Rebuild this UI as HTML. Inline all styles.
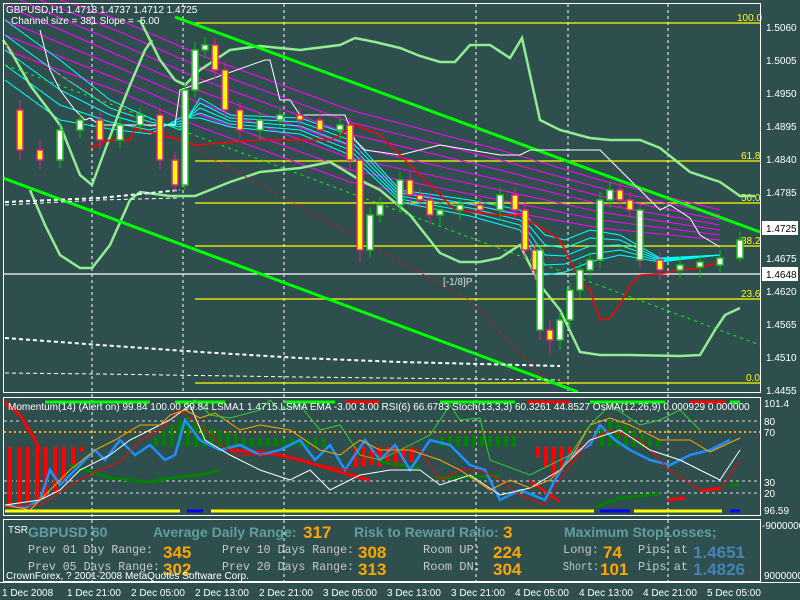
<!DOCTYPE html>
<html><head><meta charset="utf-8"><style>
body{margin:0;background:#2f4f4f;width:800px;height:600px;overflow:hidden;font-family:"Liberation Sans",sans-serif}
svg{position:absolute;left:0;top:0}
.t{font-family:"Liberation Sans",sans-serif;font-size:10px;fill:#fff}
.m{font-family:"Liberation Mono",monospace;font-size:12px;fill:#c8c8c8}
.o{font-family:"Liberation Sans",sans-serif;font-size:17px;font-weight:bold;fill:#ffa500}
.c{font-family:"Liberation Sans",sans-serif;font-size:14px;font-weight:bold;fill:#5f9ea0}
</style></head><body>
<svg width="800" height="600" viewBox="0 0 800 600">
<rect width="800" height="600" fill="#2f4f4f"/>
<g stroke="#fff" stroke-dasharray="3,3" stroke-width="1">
<line x1="92" y1="4" x2="92" y2="582"/><line x1="183" y1="4" x2="183" y2="392"/><line x1="284" y1="4" x2="284" y2="582"/>
<line x1="476" y1="4" x2="476" y2="582"/><line x1="568" y1="4" x2="568" y2="392"/><line x1="668" y1="4" x2="668" y2="582"/>
</g>
<g stroke="#ffff00" stroke-width="1.3">
<line x1="195" y1="23" x2="760" y2="23"/><line x1="195" y1="161" x2="760" y2="161"/><line x1="195" y1="203" x2="760" y2="203"/>
<line x1="195" y1="246" x2="760" y2="246"/><line x1="195" y1="383" x2="760" y2="383"/><line x1="195" y1="299" x2="760" y2="299"/></g>
<line x1="3" y1="274" x2="760" y2="274" stroke="#fff" stroke-width="1.2"/>
<g font-family="Liberation Sans" font-size="10" fill="#ffff00">
<text x="737" y="21">100.0</text><text x="741" y="159">61.8</text><text x="741" y="201">50.0</text><text x="741" y="244">38.2</text><text x="741" y="297">23.6</text><text x="746" y="381">0.0</text></g>
<g fill="none" stroke="#ff00ff" stroke-width="1">
<polyline points="60,0 120,20 200,55 350,110 500,150 600,180 720,210"/>
<polyline points="40,0 120,32 200,67 350,122 500,160 600,188 720,215"/>
<polyline points="20,0 120,44 200,79 350,134 500,170 600,196 720,220"/>
<polyline points="5,5 120,56 200,91 350,146 500,180 600,204 720,225"/>
<polyline points="5,20 120,68 200,103 350,158 500,190 600,212 720,230"/>
<polyline points="5,35 120,80 200,115 350,170 500,200 600,220 720,235"/>
<polyline points="5,50 120,92 200,127 350,182 500,210 600,228 720,240"/>
</g>
<g fill="none" stroke="#00ffff" stroke-width="1">
<polyline points="5,20 60,60 110,100 150,118 180,130 200,98 230,115 300,118 350,135 400,190 470,200 520,210 545,235 565,240 590,230 620,235 660,258 720,255"/>
<polyline points="5,35 60,75 110,108 150,122 180,127 200,103 230,118 300,122 350,140 400,193 470,204 520,215 545,245 565,248 590,238 620,240 660,259 720,255"/>
<polyline points="5,50 60,90 110,115 150,126 180,124 200,108 230,121 300,126 350,145 400,196 470,208 520,220 545,255 565,256 590,246 620,245 660,260 720,255"/>
<polyline points="5,65 60,105 110,122 150,130 180,121 200,113 230,124 300,130 350,150 400,199 470,212 520,225 545,265 565,264 590,254 620,250 660,261 720,255"/>
<polyline points="5,80 60,120 110,129 150,134 180,118 200,118 230,127 300,134 350,155 400,202 470,216 520,230 545,275 565,272 590,262 620,255 660,262 720,255"/>
</g>
<g fill="none" stroke="#90ee90" stroke-width="2.5">
<polyline points="3,40 10,50 30,85 60,125 80,175 92,185 105,150 120,110 130,85 145,50 152,40"/>
<polyline points="140,20 160,60 175,80 185,85 200,70 230,50 260,46 300,50 340,45 355,38 375,42 400,48 420,56 440,62 455,62 470,45 490,45 510,58 522,38 540,120 560,130 590,138 610,140 640,140 660,148 690,172 720,182 740,196 755,196"/>
<polyline points="30,190 45,225 60,255 80,268 92,268 110,245 130,200 140,192 170,196 195,196 230,182 260,172 300,168 330,162 360,180 380,190 410,215 440,253 460,262 480,262 500,258 520,245 540,285 560,310 580,352 600,355 630,355 680,356 700,355 715,330 725,315 740,308"/>
</g>
<line x1="175" y1="17" x2="760" y2="232" stroke="#00ff00" stroke-width="3"/>
<line x1="3" y1="178" x2="578" y2="392" stroke="#00ff00" stroke-width="3"/>
<line x1="5" y1="65" x2="760" y2="345" stroke="#00ff00" stroke-width="1" stroke-dasharray="3,4"/>
<line x1="5" y1="45" x2="470" y2="300" stroke="#ff0000" stroke-width="1" stroke-dasharray="3,4"/>
<line x1="470" y1="300" x2="545" y2="380" stroke="#ff0000" stroke-width="1" stroke-dasharray="3,4"/>
<g fill="none" stroke="#fff" stroke-dasharray="4,3">
<polyline stroke-width="2" points="5,338 100,345 200,352 300,358 400,362 560,366"/>
<polyline stroke-width="1" points="5,373 100,374 300,377 560,380"/>
<polyline stroke-width="1" points="5,205 100,200 180,198"/>
<polyline stroke-width="2" points="5,202 100,198 180,190"/>
</g>
<polyline fill="none" stroke="#fff" stroke-width="1" points="40,30 50,70 60,90 75,110 85,120 90,118 100,125 175,125 180,90 265,60 270,60 280,100 290,100 300,115 345,115 355,140 365,150 400,155 440,145 470,150 500,155 520,155 530,150 600,150 660,210 670,205 690,218 700,235 720,247"/>
<polyline fill="none" stroke="#ff0000" stroke-width="1.5" points="90,148 110,140 130,140 135,128 180,140 195,145 260,140 330,140 340,135 355,125 380,135 395,150 430,185 455,210 500,215 520,215 545,230 560,240 580,280 590,290 600,320 610,318 620,305 630,285 640,275 660,274 680,270 700,268 720,262"/>
<path fill="none" stroke="#e0208a" stroke-width="1" d="M20 100V160M40 140V170M100 112V150M160 108V170M175 152V192M215 38V80M225 62V118M240 102V138M300 108V128M320 112V140M350 118V170M360 150V262M410 172V204M420 188V208M430 192V224M480 198V216M515 188V220M525 202V258M535 242V280M540 262V340M550 320V355M620 183V208M630 192V218M640 202V268M660 252V280"/>
<path fill="none" stroke="#00c000" stroke-width="1" d="M60 122V168M80 112V138M120 118V148M140 108V132M185 82V190M195 42V98M205 37V58M260 112V140M280 108V128M340 118V140M370 207V258M380 197V222M400 172V212M440 202V225M460 197V220M500 187V218M560 312V350M570 282V328M580 262V298M590 252V278M600 192V268M610 182V208M680 257V278M700 255V278M720 250V272M740 232V262"/>
<g stroke="#e0208a" stroke-width="1.5" fill="#ffff00">
<rect x="17" y="110" width="6" height="40"/><rect x="37" y="150" width="6" height="10"/><rect x="97" y="120" width="6" height="20"/>
<rect x="157" y="115" width="6" height="45"/><rect x="172" y="160" width="6" height="25"/><rect x="212" y="45" width="6" height="25"/>
<rect x="222" y="70" width="6" height="40"/><rect x="237" y="110" width="6" height="20"/><rect x="297" y="115" width="6" height="5"/>
<rect x="317" y="120" width="6" height="10"/><rect x="347" y="125" width="6" height="35"/><rect x="357" y="160" width="6" height="90"/>
<rect x="407" y="180" width="6" height="15"/><rect x="417" y="195" width="6" height="5"/><rect x="427" y="200" width="6" height="15"/>
<rect x="477" y="205" width="6" height="5"/><rect x="512" y="195" width="6" height="15"/><rect x="522" y="210" width="6" height="40"/>
<rect x="532" y="250" width="6" height="20"/><rect x="547" y="330" width="6" height="10"/>
<rect x="617" y="190" width="6" height="10"/><rect x="627" y="200" width="6" height="10"/><rect x="657" y="260" width="6" height="10"/></g>
<g stroke="#20c020" stroke-width="1.5" fill="#fff">
<rect x="57" y="130" width="6" height="30"/><rect x="77" y="120" width="6" height="10"/><rect x="117" y="125" width="6" height="15"/>
<rect x="137" y="115" width="6" height="10"/><rect x="182" y="90" width="6" height="95"/><rect x="192" y="50" width="6" height="40"/>
<rect x="202" y="45" width="6" height="5"/><rect x="257" y="120" width="6" height="10"/><rect x="277" y="115" width="6" height="5"/>
<rect x="337" y="125" width="6" height="5"/><rect x="367" y="215" width="6" height="35"/><rect x="377" y="205" width="6" height="10"/>
<rect x="397" y="180" width="6" height="25"/><rect x="437" y="210" width="6" height="5"/><rect x="457" y="205" width="6" height="5"/>
<rect x="497" y="195" width="6" height="15"/><rect x="537" y="250" width="6" height="80"/><rect x="557" y="320" width="6" height="20"/>
<rect x="567" y="290" width="6" height="30"/><rect x="577" y="270" width="6" height="20"/><rect x="587" y="260" width="6" height="10"/>
<rect x="597" y="200" width="6" height="60"/><rect x="607" y="190" width="6" height="10"/><rect x="637" y="210" width="6" height="50"/>
<rect x="677" y="265" width="6" height="5"/><rect x="697" y="262" width="6" height="5"/><rect x="717" y="258" width="6" height="7"/>
<rect x="737" y="240" width="6" height="18"/></g>
<text x="443" y="285" font-family="Liberation Sans" font-size="10" fill="#ddd">[-1/8]P</text>
<rect x="3.5" y="3.5" width="757" height="389" fill="none" stroke="#fff"/>
<rect x="3.5" y="397.5" width="757" height="118" fill="none" stroke="#fff"/>
<rect x="3.5" y="519.5" width="757" height="62" fill="none" stroke="#fff"/>
<line x1="0" y1="582.5" x2="800" y2="582.5" stroke="#fff"/>
<text class="t" x="6" y="13">GBPUSD,H1  1.4718 1.4737 1.4712 1.4725</text>
<text class="t" x="11" y="24" fill="#ddd">Channel size = 381 Slope = -5.00</text>
<g class="t" font-size="10">
<text x="766" y="31">1.5060</text><text x="766" y="64">1.5005</text><text x="766" y="97">1.4950</text><text x="766" y="130">1.4895</text>
<text x="766" y="163">1.4840</text><text x="766" y="196">1.4785</text><text x="766" y="262">1.4675</text><text x="766" y="295">1.4620</text>
<text x="766" y="328">1.4565</text><text x="766" y="361">1.4510</text><text x="766" y="394">1.4455</text></g>
<rect x="762" y="221" width="36" height="14" fill="#fff"/><text x="766" y="232" class="t" style="fill:#000">1.4725</text>
<rect x="762" y="267" width="36" height="14" fill="#fff"/><text x="766" y="278" class="t" style="fill:#000">1.4648</text>
<g stroke="#fff" stroke-dasharray="3,3" opacity="0.8"><line x1="4" y1="421" x2="760" y2="421"/><line x1="4" y1="481" x2="760" y2="481"/><line x1="4" y1="493" x2="760" y2="493"/></g>
<line x1="4" y1="432" x2="760" y2="432" stroke="#ffa500" stroke-width="2" stroke-dasharray="2,3"/>
<g fill="#ff0000">
<rect x="8" y="447" width="4" height="60"/><rect x="17" y="447" width="4" height="58"/><rect x="26" y="447" width="4" height="56"/>
<rect x="35" y="447" width="4" height="54"/><rect x="44" y="447" width="4" height="50"/><rect x="53" y="447" width="4" height="45"/>
<rect x="62" y="447" width="4" height="35"/><rect x="71" y="447" width="4" height="20"/><rect x="80" y="447" width="4" height="5"/>
<rect x="354" y="447" width="4" height="20"/><rect x="362" y="447" width="4" height="20"/><rect x="370" y="447" width="4" height="18"/><rect x="378" y="447" width="4" height="20"/><rect x="386" y="447" width="4" height="18"/><rect x="394" y="447" width="4" height="20"/><rect x="402" y="447" width="4" height="15"/><rect x="410" y="447" width="4" height="15"/>
<rect x="536" y="447" width="4" height="10"/><rect x="544" y="447" width="4" height="20"/><rect x="552" y="447" width="4" height="30"/><rect x="560" y="447" width="4" height="25"/><rect x="568" y="447" width="4" height="15"/><rect x="576" y="447" width="4" height="8"/></g>
<g fill="#008000">
<rect x="154" y="437" width="4" height="10"/><rect x="162" y="430" width="4" height="17"/><rect x="170" y="424" width="4" height="23"/><rect x="178" y="420" width="4" height="27"/>
<rect x="186" y="417" width="4" height="30"/><rect x="194" y="420" width="4" height="27"/><rect x="202" y="425" width="4" height="22"/><rect x="210" y="428" width="4" height="19"/>
<rect x="218" y="430" width="4" height="17"/><rect x="226" y="432" width="4" height="15"/><rect x="234" y="434" width="4" height="13"/>
<rect x="242" y="438" width="4" height="9"/><rect x="250" y="438" width="4" height="9"/><rect x="258" y="438" width="4" height="9"/><rect x="266" y="438" width="4" height="9"/><rect x="274" y="438" width="4" height="9"/><rect x="282" y="438" width="4" height="9"/><rect x="290" y="438" width="4" height="9"/><rect x="298" y="438" width="4" height="9"/><rect x="306" y="438" width="4" height="9"/><rect x="314" y="438" width="4" height="9"/><rect x="322" y="438" width="4" height="9"/>
<rect x="440" y="436" width="4" height="11"/><rect x="448" y="436" width="4" height="11"/><rect x="456" y="436" width="4" height="11"/><rect x="464" y="436" width="4" height="11"/><rect x="472" y="436" width="4" height="11"/><rect x="480" y="436" width="4" height="11"/><rect x="488" y="436" width="4" height="11"/><rect x="496" y="436" width="4" height="11"/><rect x="504" y="436" width="4" height="11"/><rect x="512" y="436" width="4" height="11"/>
<rect x="600" y="428" width="4" height="19"/><rect x="608" y="420" width="4" height="27"/><rect x="616" y="422" width="4" height="25"/><rect x="624" y="425" width="4" height="22"/><rect x="632" y="430" width="4" height="17"/><rect x="640" y="434" width="4" height="13"/><rect x="648" y="438" width="4" height="9"/><rect x="656" y="440" width="4" height="7"/></g>
<g stroke-width="3" fill="none">
<line x1="5" y1="511" x2="180" y2="511" stroke="#ffff00"/><line x1="187" y1="511" x2="203" y2="511" stroke="#0000ff"/>
<line x1="211" y1="511" x2="594" y2="511" stroke="#ffff00"/><line x1="600" y1="511" x2="630" y2="511" stroke="#0000ff"/>
<line x1="634" y1="511" x2="722" y2="511" stroke="#ffff00"/><line x1="730" y1="511" x2="740" y2="511" stroke="#0000ff"/>
<polyline stroke="#ff0000" points="5,402 20,415 35,440 40,450"/>
<line x1="45" y1="402" x2="150" y2="402" stroke="#00ff00"/><line x1="175" y1="402" x2="225" y2="402" stroke="#00ff00"/>
<line x1="285" y1="402" x2="335" y2="402" stroke="#00ff00"/><line x1="345" y1="402" x2="380" y2="402" stroke="#ff0000"/>
<line x1="440" y1="402" x2="515" y2="402" stroke="#00ff00"/><line x1="528" y1="402" x2="570" y2="402" stroke="#ff0000"/>
<line x1="590" y1="402" x2="665" y2="402" stroke="#00ff00"/><line x1="690" y1="402" x2="725" y2="402" stroke="#ff0000"/>
<line x1="730" y1="402" x2="740" y2="402" stroke="#00ff00"/>
<polyline stroke="#008000" points="70,465 85,470 100,475 110,478 130,480 150,482 170,478 200,475 220,470"/>
<polyline stroke="#ff0000" points="230,450 270,453 300,460 350,475 370,480"/>
<polyline stroke="#008000" points="380,462 420,468"/>
<polyline stroke="#008000" points="435,478 500,476"/>
<polyline stroke="#ff0000" stroke-width="2.5" points="530,481 560,502"/>
<polyline stroke="#008000" points="595,507 620,498 660,494"/>
<polyline stroke="#ff0000" points="668,500 685,498"/><polyline stroke="#ff0000" points="700,491 720,488"/><polyline stroke="#008000" points="730,485 740,485"/>
</g>
<g fill="none">
<polyline stroke="#1e90ff" stroke-width="2.5" points="5,505 25,508 40,500 50,470 60,485 75,470 95,450 105,460 120,440 135,455 150,445 165,460 175,455 185,420 200,440 220,450 240,445 260,455 280,450 300,440 315,460 330,445 345,470 365,440 380,460 395,445 410,470 430,440 450,445 470,465 485,470 500,500 520,490 545,500 555,480 570,455 590,445 600,425 615,440 630,450 650,460 670,465 690,455 710,450 730,440"/>
<polyline stroke="#ff0000" stroke-width="1" points="5,507 40,505 60,492 80,480 100,470 120,462 140,440 160,430 180,410 200,425 220,445 240,455 280,455 320,465 350,470 380,450 420,450 440,480 460,470 480,470 500,480 520,495 545,505 560,480 590,440 610,430 640,440 670,470 700,490 720,490 740,460"/>
<polyline stroke="#fff" stroke-width="1" points="5,505 40,500 60,490 80,470 110,455 130,440 150,430 170,420 190,405 205,440 230,455 260,470 290,480 310,470 330,490 360,475 390,470 420,470 440,485 470,475 500,495 530,488 560,470 590,440 620,430 650,450 680,460 700,470 720,480 740,450"/>
<polyline stroke="#ffa500" stroke-width="1" points="5,505 30,510 50,490 70,470 95,450 115,440 140,425 160,425 170,415 185,410 200,418 215,413 240,430 260,425 290,430 320,450 340,455 360,440 380,450 410,450 440,460 460,470 490,490 510,480 530,488 550,480 570,460 590,425 610,418 630,425 660,440 690,440 710,452 740,438"/>
<polyline stroke="#32cd32" stroke-width="1" points="185,405 195,400 210,415 230,418 260,410 270,400 280,410 300,405 320,430 340,425 360,455 380,460 430,435 450,405 460,420 480,418 490,460 530,475 570,455 590,425 610,405 640,425 660,420 680,410 700,430"/>
</g>
<text x="8" y="410" class="t">Momentum(14) (Alert on) 99.84 100.00 99.84  LSMA1 1.4715  LSMA  EMA -3.00 3.00  RSI(6) 66.6783  Stoch(13,3,3) 60.3261 44.8527  OsMA(12,26,9) 0.000929 0.000000</text>
<g class="t" font-size="10"><text x="764" y="407">101.4</text><text x="764" y="425">80</text><text x="764" y="436">70</text><text x="764" y="486">30</text><text x="764" y="497">20</text><text x="764" y="514">96.59</text></g>
<text x="8" y="533" class="t" font-size="9">TSR</text>
<text x="28" y="537" class="c">GBPUSD 60</text>
<text x="153" y="537" class="c">Average Daily Range:</text><text x="303" y="538" class="o">317</text>
<text x="354" y="537" class="c">Risk to Reward Ratio:</text><text x="503" y="538" class="o">3</text>
<text x="564" y="537" class="c">Maximum StopLosses;</text>
<text x="28" y="553" class="m" textLength="125" lengthAdjust="spacingAndGlyphs">Prev 01 Day Range:</text><text x="163" y="558" class="o">345</text>
<text x="222" y="553" class="m" textLength="132" lengthAdjust="spacingAndGlyphs">Prev 10 Days Range:</text><text x="358" y="558" class="o">308</text>
<text x="423" y="553" class="m" textLength="58" lengthAdjust="spacingAndGlyphs">Room UP:</text><text x="493" y="558" class="o">224</text>
<text x="563" y="553" class="m" textLength="36" lengthAdjust="spacingAndGlyphs">Long:</text><text x="603" y="558" class="o">74</text><text x="638" y="553" class="m" textLength="50" lengthAdjust="spacingAndGlyphs">Pips at</text>
<text x="693" y="558" class="o" style="fill:#4682b4">1.4651</text>
<text x="28" y="570" class="m" textLength="132" lengthAdjust="spacingAndGlyphs">Prev 05 Days Range:</text><text x="163" y="575" class="o">302</text>
<text x="222" y="570" class="m" textLength="132" lengthAdjust="spacingAndGlyphs">Prev 20 Days Range:</text><text x="358" y="575" class="o">313</text>
<text x="423" y="570" class="m" textLength="58" lengthAdjust="spacingAndGlyphs">Room DN:</text><text x="493" y="575" class="o">304</text>
<text x="563" y="570" class="m" textLength="36" lengthAdjust="spacingAndGlyphs">Short:</text><text x="600" y="575" class="o">101</text><text x="638" y="570" class="m" textLength="50" lengthAdjust="spacingAndGlyphs">Pips at</text>
<text x="693" y="575" class="o" style="fill:#4682b4">1.4826</text>
<text x="6" y="579" class="t">CrownForex, ? 2001-2008 MetaQuotes Software Corp.</text>
<text x="762" y="529" class="t">-9000000</text><text x="764" y="579" class="t">9000000</text>
<g class="t" font-size="10">
<text x="2" y="596">1 Dec 2008</text><text x="67" y="596">1 Dec 21:00</text><text x="131" y="596">2 Dec 05:00</text><text x="195" y="596">2 Dec 13:00</text>
<text x="259" y="596">2 Dec 21:00</text><text x="323" y="596">3 Dec 05:00</text><text x="387" y="596">3 Dec 13:00</text><text x="451" y="596">3 Dec 21:00</text>
<text x="515" y="596">4 Dec 05:00</text><text x="579" y="596">4 Dec 13:00</text><text x="643" y="596">4 Dec 21:00</text><text x="707" y="596">5 Dec 05:00</text></g>
</svg>
</body></html>
